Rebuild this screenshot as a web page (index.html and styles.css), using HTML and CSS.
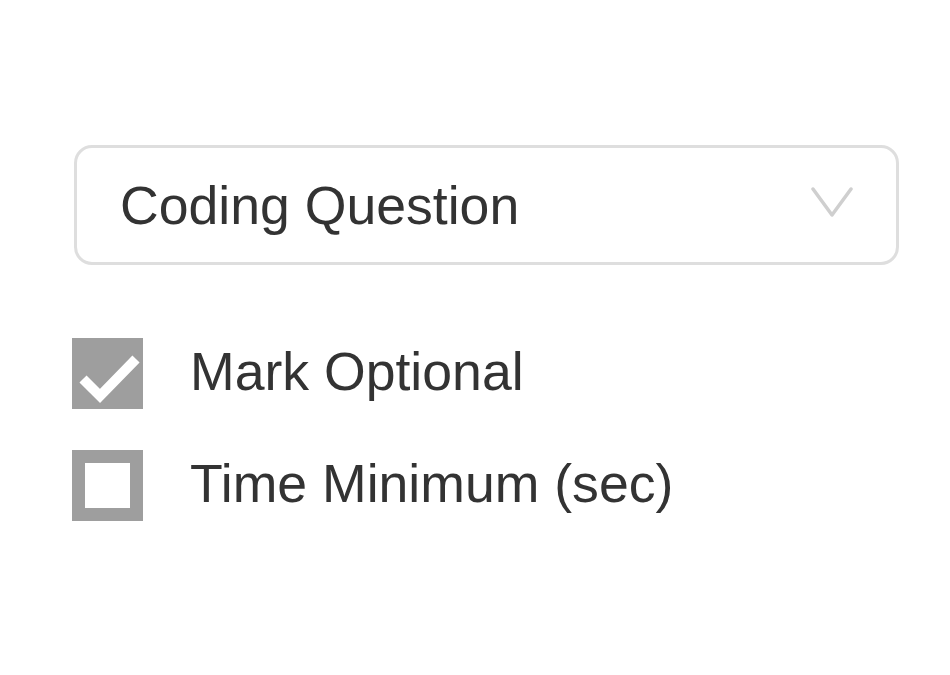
FILE: index.html
```html
<!DOCTYPE html>
<html lang="en">
<head>
<meta charset="utf-8">
<title>Question Settings</title>
<link rel="stylesheet" href="styles.css">
</head>
<body>
<div class="panel">
  <div class="select" role="combobox" aria-expanded="false">
    <span class="select-value">Coding Question</span>
    <svg class="chevron" width="42" height="31" viewBox="0 0 42 31" aria-hidden="true">
      <polyline points="2,2 21,28 40,2" fill="none" stroke="#cfcfcf" stroke-width="3.5" stroke-linejoin="round" stroke-linecap="round"/>
    </svg>
  </div>
  <div class="options">
    <label class="option">
      <svg class="box" width="71" height="71" viewBox="0 0 71 71" aria-hidden="true">
        <rect x="0" y="0" width="71" height="71" fill="#9e9e9e"/>
        <polyline points="11,41 28,58 64,21" fill="none" stroke="#ffffff" stroke-width="10"/>
      </svg>
      <span class="option-label">Mark Optional</span>
    </label>
    <label class="option">
      <span class="box box-empty"></span>
      <span class="option-label">Time Minimum (sec)</span>
    </label>
  </div>
</div>
</body>
</html>
```
FILE: styles.css
```css
html, body {
  margin: 0;
  padding: 0;
  background: #ffffff;
}

body {
  font-family: "Liberation Sans", Arial, sans-serif;
  color: #333333;
}

.panel {
  padding: 145px 51px 0 74px;
  display: flex;
  flex-direction: column;
}

.select {
  box-sizing: border-box;
  height: 120px;
  border: 3px solid #dedede;
  border-radius: 18px;
  padding: 0 43px 0 43px;
  display: flex;
  align-items: center;
  justify-content: space-between;
}

.select-value {
  font-size: 53.6px;
  line-height: 60px;
  color: #333333;
  margin-top: -1px;
}

.chevron {
  display: block;
  margin-top: -5px;
}

.options {
  margin-top: 73px;
  display: flex;
  flex-direction: column;
  gap: 41px;
}

.option {
  display: flex;
  align-items: center;
  gap: 47px;
  margin-left: -2px;
}

.box {
  display: block;
  flex: 0 0 auto;
  width: 71px;
  height: 71px;
}

.box-empty {
  box-sizing: border-box;
  border: 13px solid #9e9e9e;
  background: #ffffff;
}

.option-label {
  font-size: 53.6px;
  line-height: 71px;
  margin-top: -5px;
  color: #333333;
}
```
